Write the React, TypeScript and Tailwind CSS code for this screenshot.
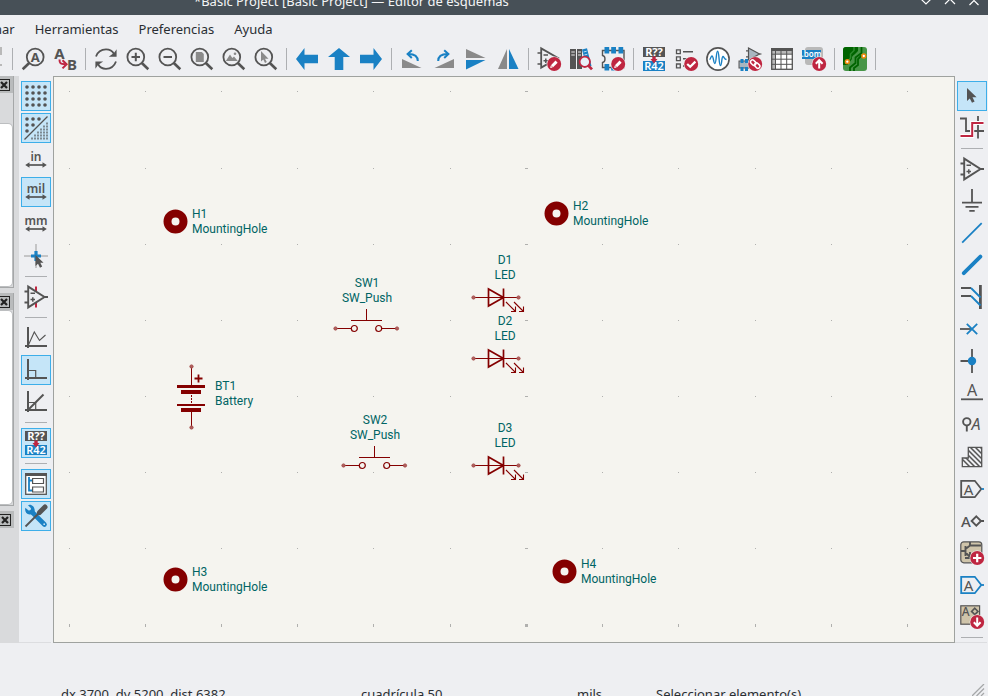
import type { ReactNode } from 'react';

const DARK = '#545454';
const BLUE = '#1a81c4';
const RED = '#bf2641';
const MAROON = '#840000';
const TEAL = '#006464';

function Icon({ children }: { children: ReactNode }) {
  return (
    <svg width="24" height="24" viewBox="0 0 24 24" fill="none" aria-hidden="true" className="shrink-0 overflow-visible">
      {children}
    </svg>
  );
}

// Red round badge in the lower right corner of an icon
function Badge({ kind }: { kind: 'edit' | 'check' | 'link' | 'up' | 'down' | 'plus' }) {
  return (
    <g>
      <circle cx="17.2" cy="17" r="7.6" fill="#eff0f1" />
      <circle cx="17.2" cy="17" r="7" fill={RED} />
      {kind === 'edit' && (
        <>
          <path d="M15 19.2 19.6 14.6" stroke="#fff" strokeWidth="3" />
          <path d="M13.2 21 13.7 18.5 15.7 20.5Z" fill="#fff" />
        </>
      )}
      {kind === 'check' && <path d="M13.2 17 16.2 19.8 21.4 14.6" stroke="#fff" strokeWidth="2.2" />}
      {kind === 'link' && (
        <g stroke="#fff" strokeWidth="1.5">
          <rect x="12.2" y="13.6" width="6" height="4" rx="2" transform="rotate(45 15.2 15.6)" />
          <rect x="16.2" y="16.6" width="6" height="4" rx="2" transform="rotate(45 19.2 18.6)" />
        </g>
      )}
      {kind === 'up' && <path d="M17.2 21.5V14M13.8 16.8 17.2 13.3 20.6 16.8" stroke="#fff" strokeWidth="2" />}
      {kind === 'down' && <path d="M17.2 12.5V20M13.8 17.2 17.2 20.7 20.6 17.2" stroke="#fff" strokeWidth="2" />}
      {kind === 'plus' && <path d="M17.2 12.8V21.2M13 17H21.4" stroke="#fff" strokeWidth="2.2" />}
    </g>
  );
}

function Letter({ x, y, size, children, fill = DARK, weight = 400, italic = false }: {
  x: number; y: number; size: number; children: string; fill?: string; weight?: number; italic?: boolean;
}) {
  return (
    <text x={x} y={y} fontSize={size} fill={fill} fontWeight={weight} fontStyle={italic ? 'italic' : 'normal'} textAnchor="middle">
      {children}
    </text>
  );
}

function Magnifier({ children }: { children: ReactNode }) {
  return (
    <Icon>
      <circle cx="9.8" cy="10" r="8.4" stroke={DARK} strokeWidth="1.8" />
      <path d="M15.8 16 22.3 22.3" stroke={DARK} strokeWidth="2.6" />
      {children}
    </Icon>
  );
}

function FindIcon() {
  return (
    <Icon>
      <circle cx="14.2" cy="10" r="8.4" stroke={DARK} strokeWidth="1.8" />
      <path d="M8.2 16 1.7 22.3" stroke={DARK} strokeWidth="2.6" />
      <Letter x={14.2} y={14.5} size={13} weight={700}>A</Letter>
    </Icon>
  );
}

function ReplaceIcon() {
  return (
    <Icon>
      <Letter x={6.5} y={11.5} size={15} weight={700}>A</Letter>
      <Letter x={19} y={23} size={15} weight={700}>B</Letter>
      <path d="M6.5 12.5C6.5 16.5 7.5 17.2 12 17.2" stroke={RED} strokeWidth="2" />
      <path d="M9.5 13.2 13.6 17.3 9.5 21.4" stroke={RED} strokeWidth="2" />
    </Icon>
  );
}

function RefreshIcon() {
  return (
    <Icon>
      <path d="M2 9.5C4 4 8 2.4 12 2.4 15.5 2.4 18.5 4.2 20 7" stroke={DARK} strokeWidth="1.8" />
      <path d="M22.6 2.3V9.8H14.8L17.8 7.6 20 6Z" fill={DARK} />
      <path d="M22 14.5C20 20 16 21.8 12 21.8 8.5 21.8 5.5 20 4 17" stroke={DARK} strokeWidth="1.8" />
      <path d="M1.4 21.8V14.4H9.2L6.2 16.6 4 18Z" fill={DARK} />
    </Icon>
  );
}

function RotateIcon({ cw = false }: { cw?: boolean }) {
  return (
    <Icon>
      <g transform={cw ? 'matrix(-1 0 0 1 24 0)' : undefined}>
        <path d="M2 12V21H21.5Z" fill="#8a8a8a" />
        <path d="M17.8 14C17.8 9.6 14.5 7 8.5 7" stroke={BLUE} strokeWidth="2" />
        <path d="M11.8 3.2 7.6 7 11.8 11" stroke={BLUE} strokeWidth="2" />
      </g>
    </Icon>
  );
}

function OpampShape() {
  return (
    <>
      <path d="M4.2 1.6V22.4L20.5 12Z" stroke={DARK} strokeWidth="1.9" />
      <path d="M0.5 6.5H4M0.5 17.5H4M20 12H24" stroke={DARK} strokeWidth="1.8" />
      <path d="M6.5 8.3H11M6.5 14.5H11M8.8 12.2V16.8" stroke={DARK} strokeWidth="1.5" />
    </>
  );
}

function SymbolEditorIcon() {
  return (
    <Icon>
      <path d="M4.2 1.4V20.6L21 11Z" stroke={DARK} strokeWidth="1.8" />
      <path d="M0.5 6H4M0.5 17H4M6.5 8H11M6.5 13.8H11M8.8 11.5V16" stroke={DARK} strokeWidth="1.5" />
      <Badge kind="edit" />
    </Icon>
  );
}

function LibraryIcon() {
  return (
    <Icon>
      <rect x="1" y="2" width="6" height="20" fill={DARK} />
      <rect x="8" y="2" width="5" height="20" fill={DARK} />
      <path d="M2.3 5H5.8M2.3 8H5.8M9 5H12M9 8H12" stroke="#e8e8e8" strokeWidth="1" />
      <path d="M13 2.5 18 1.2 22.5 19 17.5 20Z" fill={BLUE} />
      <path d="M14.7 5 17.7 4.2M15.4 8 18.4 7.2" stroke="#b9dcf2" strokeWidth="1" />
      <circle cx="15.8" cy="14.8" r="5.2" fill="#e8f1f8" stroke={RED} strokeWidth="1.8" />
      <path d="M19.4 18.6 23 22.4" stroke={RED} strokeWidth="2.8" />
    </Icon>
  );
}

function FootprintIcon() {
  return (
    <Icon>
      <path d="M1.5 3.5H23V20.5H1.5V15.5C4.8 15 4.8 9 1.5 8.5Z" stroke={DARK} strokeWidth="1.4" />
      <path d="M3.5 0H8.2V6.5H3.5ZM10.2 0H15V6.5H10.2ZM17.5 0H22.2V6.5H17.5ZM3.5 17H8.2V23.5H3.5ZM10.2 17H15V23.5H10.2Z" fill={BLUE} />
      <Badge kind="edit" />
    </Icon>
  );
}

function AnnotateIcon() {
  return (
    <Icon>
      <rect x="1" y="0" width="22" height="10" fill={DARK} />
      <rect x="1" y="14" width="22" height="10" fill={BLUE} />
      <Letter x={12} y={9} size={11} weight={700} fill="#fff">R??</Letter>
      <Letter x={12} y={23} size={11} weight={600} fill="#fff">R42</Letter>
      <path d="M10.3 9.5H13.7V12H15.5L12 16.4 8.5 12H10.3Z" fill={RED} />
    </Icon>
  );
}

function ErcIcon() {
  return (
    <Icon>
      <path d="M2.5 2.8H6.3V6.6H2.5ZM2.5 9.9H6.3V13.7H2.5ZM2.5 17H6.3V20.8H2.5Z" stroke={DARK} strokeWidth="1.3" />
      <path d="M9 4.8H19M9 11.8H15M9 19H12" stroke={DARK} strokeWidth="1.4" />
      <Badge kind="check" />
    </Icon>
  );
}

function SimIcon() {
  return (
    <Icon>
      <circle cx="12" cy="12" r="11.1" fill="#fff" stroke={DARK} strokeWidth="1.6" />
      <path d="M3.5 12.5C4.5 12.5 5 9 6 9 7.5 9 7.5 16.5 8.8 16.5 10.5 16.5 10 4.2 11.6 4.2 13.3 4.2 12.8 18.5 14.4 18.5 16 18.5 15.5 9.5 17 9.5 18 9.5 18.3 12.5 20.5 12.5" stroke={BLUE} strokeWidth="1.4" />
    </Icon>
  );
}

function AssignIcon() {
  return (
    <Icon>
      <path d="M10.5 1V13L21.5 7Z" fill="#a9b6c0" stroke={DARK} strokeWidth="1.2" />
      <path d="M8 3.8H10.5M8 9.8H10.5M21 7H23.5" stroke={DARK} strokeWidth="1.2" />
      <rect x="1" y="14" width="14" height="7" fill="#a9b6c0" stroke={DARK} strokeWidth="1" />
      <path d="M2.5 12H5.5V16H2.5ZM7 12H10V16H7ZM2.5 20H5.5V24H2.5ZM7 20H10V24H7Z" fill={BLUE} />
      <Badge kind="link" />
    </Icon>
  );
}

function TableIcon() {
  return (
    <Icon>
      <rect x="1.7" y="1.7" width="20.6" height="20.6" fill="#fff" />
      <path d="M1.7 4H22.3V7H5.5V22.3H1.7Z" fill="#b9b9b9" />
      <path d="M1 7.2H23M1 12.2H23M1 17.3H23M5.5 3V22M11 3V22M16.7 3V22" stroke={DARK} strokeWidth="1" />
      <rect x="1.7" y="1.7" width="20.6" height="20.6" stroke={DARK} strokeWidth="1.3" />
      <path d="M1 2.5H23" stroke={DARK} strokeWidth="3" />
    </Icon>
  );
}

function BomIcon() {
  return (
    <Icon>
      <rect x="3" y="0" width="18" height="18" rx="3" fill="#b9b9b9" />
      <rect x="0" y="3" width="19" height="9" fill={BLUE} />
      <Letter x={9.5} y={10} size={8} weight={600} fill="#fff">.bom</Letter>
      <Badge kind="up" />
    </Icon>
  );
}

function PcbIcon() {
  return (
    <Icon>
      <rect width="24" height="24" rx="3" fill="#489648" />
      <path d="M3 0H15V4L9 10V12L4.5 18H0V3A3 3 0 0 1 3 0Z" fill="#006400" />
      <path d="M16.500 0V5.500L10.500 9.500V15L5 20V24" stroke="#489648" strokeWidth="1.6" />
      <path d="M18.500 0V6L12.500 10.500V16L7 20.500V24" stroke="#006400" strokeWidth="1.8" />
      <path d="M20.800 9H18L15 12V18L11 21V24" stroke="#006400" strokeWidth="1.8" />
      <path d="M4.300 14.700 7.500 11V7L11 3.500V0" stroke="#2c8a2c" strokeWidth="1.5" />
      <circle cx="4.3" cy="14.7" r="1.9" fill="#fff" stroke="#f0870a" strokeWidth="1.5" />
      <circle cx="20.8" cy="9" r="1.9" fill="#fff" stroke="#f0870a" strokeWidth="1.5" />
    </Icon>
  );
}

function GridIcon() {
  const steps = [3, 9, 15, 21];
  return (
    <Icon>
      {steps.map((y) => steps.map((x) => <circle key={`${x}-${y}`} cx={x} cy={y} r="1.8" fill={DARK} />))}
    </Icon>
  );
}

function GridOverrideIcon() {
  const small: [number, number][] = [];
  for (let r = 0; r < 6; r++) {
    for (let c = 5 - r; c < 6; c++) small.push([7 + c * 3, 6.5 + r * 3]);
  }
  return (
    <Icon>
      {[[3, 3], [9, 3], [15, 3], [3, 9], [9, 9], [3, 15]].map(([x, y]) => (
        <circle key={`${x}-${y}`} cx={x} cy={y} r="1.8" fill={DARK} />
      ))}
      {small.map(([x, y]) => (
        <rect key={`${x}-${y}`} x={x} y={y} width="2" height="2" fill="#7d8a92" />
      ))}
      <path d="M0.5 23.5 23.5 0.5" stroke={DARK} strokeWidth="1.3" />
    </Icon>
  );
}

function UnitIcon({ unit }: { unit: string }) {
  return (
    <Icon>
      <Letter x={12} y={13} size={12} weight={600}>{unit}</Letter>
      <path d="M3 17H21" stroke={DARK} strokeWidth="1.7" />
      <path d="M1.2 17 5.5 14.2V19.8ZM22.8 17 18.5 14.2V19.8Z" fill={DARK} />
    </Icon>
  );
}

function CrosshairIcon() {
  return (
    <Icon>
      <path d="M12 0V24M0 12H24" stroke="#9a9a9a" strokeWidth="1" />
      <path d="M12 7V17M7 12H17" stroke={BLUE} strokeWidth="3.2" />
      <path d="M11.5 11V22L14 19.7 16 23.7 18.2 22.6 16.3 18.8H19.5Z" fill={DARK} />
    </Icon>
  );
}

function HiddenPinsIcon() {
  return (
    <Icon>
      <path d="M12 1.5V6M12 18V22.5" stroke={RED} strokeWidth="2" />
      <OpampShape />
    </Icon>
  );
}

function AxisIcon({ kind }: { kind: 'free' | 'right' | 'diagonal' }) {
  return (
    <Icon>
      <path d="M4 1V22M1 20H23" stroke={DARK} strokeWidth="2" />
      {kind === 'free' && <path d="M4 20 10.3 6 15.5 14.5 21.5 9" stroke={DARK} strokeWidth="1.1" />}
      {kind !== 'free' && <path d="M4 12.5H11.7V20" stroke={DARK} strokeWidth="1.2" />}
      {kind === 'diagonal' && <path d="M4 20 19.5 4.5" stroke={DARK} strokeWidth="2" />}
    </Icon>
  );
}

function HierarchyIcon() {
  return (
    <Icon>
      <rect x="1.7" y="1.7" width="20.6" height="20.6" fill="#fff" stroke={DARK} strokeWidth="1.3" />
      <path d="M1 2.5H23" stroke={DARK} strokeWidth="3" />
      <path d="M5 5V18.5H9M5 8.5H9" stroke={BLUE} strokeWidth="1.8" />
      <path d="M8.6 6.5H19.5V11.5H8.6ZM8.6 15H19.5V20H8.6Z" fill="#fff" stroke={DARK} strokeWidth="1.2" />
    </Icon>
  );
}

function ToolsIcon() {
  return (
    <Icon>
      <path d="M8 8 20.5 20.5" stroke={BLUE} strokeWidth="4.6" strokeLinecap="round" />
      <path d="M4 1.2 7 4.2 6.6 6.2 4.6 6.6 1.4 3.8C.4 7 2.2 10.3 5.6 10.6L8 10.3 10.6 7.8C11.3 4.5 9 .8 5.6.8Z" fill={BLUE} />
      <circle cx="20.2" cy="20.2" r="0.9" fill="#c5e5f8" />
      <path d="M1.5 22.5 15 9" stroke={DARK} strokeWidth="1.8" />
      <path d="M15.5 8.5 21 3" stroke={DARK} strokeWidth="5" strokeLinecap="round" />
    </Icon>
  );
}

function HighlightNetIcon() {
  return (
    <Icon>
      <path d="M0 2.5H6V15H10M18 0V22.5M14 15H24" stroke={DARK} strokeWidth="1.8" />
      <path d="M0.5 20H12.2V7H23.5" stroke="#fff" strokeWidth="4" />
      <path d="M0.5 20H12.2V7H23.5" stroke={RED} strokeWidth="2" />
    </Icon>
  );
}

function LabelIcon({ color }: { color: string }) {
  return (
    <Icon>
      <path d="M1.2 3.8H14.8L21.3 12 14.8 20.2H1.2Z" stroke={color} strokeWidth="1.8" />
      <path d="M21.5 12H24" stroke={BLUE} strokeWidth="1.8" />
      <Letter x={8.6} y={17.5} size={15}>A</Letter>
    </Icon>
  );
}

function RuleAreaIcon() {
  return (
    <Icon>
      <clipPath id="rule-area">
        <path d="M8.3 2.3H21.7V21.7H2.3V13H8.3Z" />
      </clipPath>
      <path clipPath="url(#rule-area)" d="M-12 0 12 24M-7 0 17 24M-2 0 22 24M3 0 27 24M8 0 32 24M13 0 37 24M18 0 42 24" stroke={DARK} strokeWidth="1.5" />
      <path d="M8.3 2.3H21.7V21.7H2.3V13H8.3Z" stroke={DARK} strokeWidth="1.3" />
    </Icon>
  );
}

function SheetIcon() {
  return (
    <Icon>
      <rect x="0.8" y="0.8" width="21" height="21" rx="3" fill="#cfc4aa" stroke={DARK} strokeWidth="1.2" />
      <path d="M1 10H5M5.5 5V15M5.5 8 10 4.5V1M10 4.5H21M5.5 11.5 10 16M10 11V17H5" stroke={DARK} strokeWidth="1.9" />
      <Badge kind="plus" />
    </Icon>
  );
}

type Tool = { label: string; icon: ReactNode; active?: boolean } | 'sep';

const topTools: Tool[] = [
  'sep',
  { label: 'Buscar', icon: <FindIcon /> },
  { label: 'Buscar y reemplazar', icon: <ReplaceIcon /> },
  'sep',
  { label: 'Refrescar', icon: <RefreshIcon /> },
  { label: 'Acercar', icon: <Magnifier><path d="M5.5 10H14M9.8 5.8V14.2" stroke={DARK} strokeWidth="2" /></Magnifier> },
  { label: 'Alejar', icon: <Magnifier><path d="M5.5 10H14" stroke={DARK} strokeWidth="2" /></Magnifier> },
  { label: 'Ajustar a la hoja', icon: <Magnifier><path d="M5.8 5H11.8L13.8 7V15H5.8Z" fill="#8a8a8a" /></Magnifier> },
  {
    label: 'Ajustar a los objetos',
    icon: (
      <Magnifier>
        <path d="M3.8 14 8 7.5 10.3 11 12 9.5 15.8 14Z" fill="#8a8a8a" />
        <circle cx="13" cy="6.8" r="1.3" fill="#8a8a8a" />
      </Magnifier>
    ),
  },
  {
    label: 'Ajustar a la selección',
    icon: <Magnifier><path d="M7 4V14.5L9.3 12.5 11 16 12.8 15 11 11.8H14.5Z" fill="#8a8a8a" /></Magnifier>,
  },
  'sep',
  { label: 'Atrás', icon: <Icon><path d="M1 12 9.5 1V7.7H23V16.3H9.5V23Z" fill={BLUE} /></Icon> },
  { label: 'Subir', icon: <Icon><path d="M12 1 23 10H16.3V23H7.7V10H1Z" fill={BLUE} /></Icon> },
  { label: 'Adelante', icon: <Icon><path d="M23 12 14.5 1V7.7H1V16.3H14.5V23Z" fill={BLUE} /></Icon> },
  'sep',
  { label: 'Rotar a la izquierda', icon: <RotateIcon /> },
  { label: 'Rotar a la derecha', icon: <RotateIcon cw /> },
  {
    label: 'Reflejar verticalmente',
    icon: <Icon><path d="M2 2V11H21.5Z" fill="#8a8a8a" /><path d="M2 13H21.5L2 22.5Z" fill={BLUE} /></Icon>,
  },
  {
    label: 'Reflejar horizontalmente',
    icon: <Icon><path d="M11 2V22H2Z" fill="#8a8a8a" /><path d="M13 2V22H22.5Z" fill={BLUE} /></Icon>,
  },
  'sep',
  { label: 'Editor de símbolos', icon: <SymbolEditorIcon /> },
  { label: 'Explorar bibliotecas', icon: <LibraryIcon /> },
  { label: 'Editor de huellas', icon: <FootprintIcon /> },
  'sep',
  { label: 'Anotar', icon: <AnnotateIcon /> },
  { label: 'Comprobar reglas', icon: <ErcIcon /> },
  { label: 'Simulador', icon: <SimIcon /> },
  { label: 'Asignar huellas', icon: <AssignIcon /> },
  { label: 'Tabla de campos', icon: <TableIcon /> },
  { label: 'Generar BOM', icon: <BomIcon /> },
  'sep',
  { label: 'Abrir placa', icon: <PcbIcon /> },
  'sep',
];

const leftTools: Tool[] = [
  { label: 'Cuadrícula', icon: <GridIcon />, active: true },
  { label: 'Cuadrículas alternativas', icon: <GridOverrideIcon />, active: true },
  { label: 'Pulgadas', icon: <UnitIcon unit="in" /> },
  { label: 'Milésimas', icon: <UnitIcon unit="mil" />, active: true },
  { label: 'Milímetros', icon: <UnitIcon unit="mm" /> },
  { label: 'Cursor completo', icon: <CrosshairIcon /> },
  'sep',
  { label: 'Pines ocultos', icon: <HiddenPinsIcon /> },
  'sep',
  { label: 'Ángulo libre', icon: <AxisIcon kind="free" /> },
  { label: 'Ángulo de 90', icon: <AxisIcon kind="right" />, active: true },
  { label: 'Ángulo de 45', icon: <AxisIcon kind="diagonal" /> },
  'sep',
  { label: 'Anotación automática', icon: <AnnotateIcon />, active: true },
  'sep',
  { label: 'Jerarquía', icon: <HierarchyIcon />, active: true },
  { label: 'Propiedades', icon: <ToolsIcon />, active: true },
];

const rightTools: Tool[] = [
  {
    label: 'Seleccionar',
    icon: <Icon><path d="M7 4V17L9.8 14.5 12 18.8 14.6 17.5 12.5 13.3H16.6Z" fill={DARK} /></Icon>,
    active: true,
  },
  { label: 'Resaltar red', icon: <HighlightNetIcon /> },
  'sep',
  { label: 'Agregar símbolo', icon: <Icon><OpampShape /></Icon> },
  {
    label: 'Agregar alimentación',
    icon: <Icon><path d="M12 0V13.5M2 13.7H22M5.5 17.8H18.5M9.3 21.8H14.7" stroke={DARK} strokeWidth="1.8" /></Icon>,
  },
  { label: 'Agregar cable', icon: <Icon><path d="M2.2 21.6 21.7 2.2" stroke={BLUE} strokeWidth="1.8" /></Icon> },
  { label: 'Agregar bus', icon: <Icon><path d="M3.8 20.2 20.4 3.6" stroke={BLUE} strokeWidth="3.8" strokeLinecap="round" /></Icon> },
  {
    label: 'Agregar entrada de bus',
    icon: (
      <Icon>
        <path d="M1 3H11M1 11H11" stroke={DARK} strokeWidth="1.8" />
        <path d="M20.4 0V24" stroke={DARK} strokeWidth="2.8" />
        <path d="M11 3 20.5 12.5M11 11 20.5 20.5" stroke={BLUE} strokeWidth="1.8" />
      </Icon>
    ),
  },
  {
    label: 'Agregar no conexión',
    icon: (
      <Icon>
        <path d="M0 12H11" stroke={DARK} strokeWidth="1.8" />
        <path d="M6.8 6.8 17.2 17.2M6.8 17.2 17.2 6.8" stroke={BLUE} strokeWidth="1.8" />
      </Icon>
    ),
  },
  {
    label: 'Agregar unión',
    icon: (
      <Icon>
        <path d="M12 0V24M0.5 12H12" stroke={DARK} strokeWidth="1.8" />
        <circle cx="12" cy="12" r="4.2" fill={BLUE} />
      </Icon>
    ),
  },
  {
    label: 'Agregar etiqueta',
    icon: <Icon><Letter x={12} y={15} size={16}>A</Letter><path d="M1 18.3H23" stroke={DARK} strokeWidth="1.8" /></Icon>,
  },
  {
    label: 'Agregar directiva de red',
    icon: (
      <Icon>
        <circle cx="6.8" cy="8.8" r="3.7" stroke={DARK} strokeWidth="1.9" />
        <path d="M6.8 12.5V18.5" stroke={DARK} strokeWidth="1.9" />
        <Letter x={16} y={17} size={16} italic>A</Letter>
      </Icon>
    ),
  },
  { label: 'Agregar área de reglas', icon: <RuleAreaIcon /> },
  { label: 'Agregar etiqueta global', icon: <LabelIcon color={DARK} /> },
  {
    label: 'Agregar etiqueta jerárquica',
    icon: (
      <Icon>
        <Letter x={6} y={17.5} size={15} weight={500}>A</Letter>
        <path d="M16.3 7.3 21 12 16.3 16.7 11.6 12ZM21 12H24" stroke={DARK} strokeWidth="1.9" />
      </Icon>
    ),
  },
  { label: 'Agregar hoja', icon: <SheetIcon /> },
  { label: 'Importar pin de hoja', icon: <LabelIcon color={BLUE} /> },
  {
    label: 'Sincronizar pines',
    icon: (
      <Icon>
        <rect x="0.8" y="0.8" width="18.8" height="18.4" fill="#cfc4aa" stroke={DARK} strokeWidth="1.2" />
        <Letter x={5.8} y={10.5} size={12} weight={500}>A</Letter>
        <path d="M14.8 3.2 18 6.4 14.8 9.6 11.6 6.4Z" stroke={DARK} strokeWidth="1.6" />
        <Badge kind="down" />
      </Icon>
    ),
  },
  'sep',
];

function SideToolbar({ tools, label }: { tools: Tool[]; label: string }) {
  return (
    <div role="toolbar" aria-label={label} className="flex shrink-0 flex-col items-center border-b border-[#dcdde0] pt-1 pl-0.5">
      {tools.map((tool, i) =>
        tool === 'sep' ? (
          <div key={i} className="my-1 h-px w-[22px] shrink-0 bg-[#adafb2]" />
        ) : (
          <button
            key={i}
            type="button"
            aria-label={tool.label}
            className={`my-px flex size-[30px] shrink-0 items-center justify-center border ${
              tool.active ? 'border-[#3daee9] bg-[#c5e5f8]' : 'border-transparent'
            }`}
          >
            {tool.icon}
          </button>
        )
      )}
    </div>
  );
}

function DockHeader() {
  return (
    <div className="flex h-[17px] shrink-0 items-center justify-end bg-[#b9bbbc] pr-[3px]">
      <button type="button" aria-label="Cerrar panel" className="shrink-0">
        <svg width="12" height="12" viewBox="0 0 12 12" fill="none" className="block">
          <rect x="0.5" y="0.5" width="11" height="11" stroke="#222" />
          <path d="M3 3 9 9M9 3 3 9" stroke="#222" strokeWidth="2.2" />
        </svg>
      </button>
    </div>
  );
}

function LeftDocks() {
  return (
    <aside className="flex w-[19px] shrink-0 flex-col bg-[#d9dadc] pr-[5px]">
      <section className="flex h-[212px] shrink-0 flex-col border-r border-b border-[#a5a7a8]">
        <DockHeader />
        <div className="mt-[30px] grow rounded-r-[5px] border-y border-r border-[#bcbec0] bg-white" />
      </section>
      <section className="mt-[5px] flex h-[213px] shrink-0 flex-col border-r border-b border-[#a5a7a8]">
        <DockHeader />
        <div className="grow rounded-r-[5px] border-y border-r border-[#bcbec0] bg-white" />
      </section>
      <section className="mt-[5px]">
        <DockHeader />
      </section>
    </aside>
  );
}

// Open end of an unconnected pin
function PinEnd({ x, y }: { x: number; y: number }) {
  return <circle cx={x} cy={y} r="1.6" fill="#b0605e" stroke="#a34a48" strokeWidth="1" />;
}

function SymbolText({ x, y, refName, value, centered = false }: {
  x: number; y: number; refName: string; value: string; centered?: boolean;
}) {
  return (
    <text fontSize="12" fill={TEAL} textAnchor={centered ? 'middle' : 'start'}>
      <tspan x={x} y={y}>{refName}</tspan>
      <tspan x={x} y={y + 15}>{value}</tspan>
    </text>
  );
}

function MountingHole({ x, y, name }: { x: number; y: number; name: string }) {
  return (
    <g transform={`translate(${x} ${y})`}>
      <circle cx="0.5" cy="0.5" r="8" stroke={MAROON} strokeWidth="8" fill="none" />
      <SymbolText x={17} y={-3} refName={name} value="MountingHole" />
    </g>
  );
}

function PushSwitch({ x, y, name }: { x: number; y: number; name: string }) {
  return (
    <g transform={`translate(${x} ${y})`} stroke={MAROON} fill="none">
      <path d="M-30 .5H-15M15.500 .5H31M-15-7.500H16M.5-19V-8" />
      <circle cx="-11.7" cy="0.5" r="3" strokeWidth="1.2" />
      <circle cx="12.7" cy="0.5" r="3" strokeWidth="1.2" />
      <g stroke="none">
        <PinEnd x={-30.5} y={0.5} />
        <PinEnd x={31} y={0.5} />
        <SymbolText x={1} y={-41} refName={name} value="SW_Push" centered />
      </g>
    </g>
  );
}

function Led({ x, y, name }: { x: number; y: number; name: string }) {
  return (
    <g transform={`translate(${x} ${y})`} fill="none">
      <path d="M-22 .5H23" stroke={MAROON} />
      <path d="M-7.500-8V9L7.500 .5ZM7.500-8.500V9.500" stroke={MAROON} strokeWidth="1.7" />
      <path d="M10 5 19.500 14.500M15 14.500H19.500V9.500M18 5 27.500 14.500M23 14.500H27.500V9.500" stroke={MAROON} strokeWidth="1.1" />
      <PinEnd x={-22.5} y={0.5} />
      <PinEnd x={22.5} y={0.5} />
      <SymbolText x={9} y={-33} refName={name} value="LED" centered />
    </g>
  );
}

function Battery({ x, y, name }: { x: number; y: number; name: string }) {
  return (
    <g transform={`translate(${x} ${y})`}>
      <path d="M.5-30V-11M.5 14V30" stroke={MAROON} />
      <path d="M.5-2V8" stroke={MAROON} strokeDasharray="2 1" />
      <path d="M-14-12H14V-9H-14ZM-10-7H10V-3H-10ZM-14 7H14V9H-14ZM-10 11H10V15H-10Z" fill={MAROON} />
      <path d="M3.500-18.500H11.500M7.500-22.500V-14.500" stroke={MAROON} strokeWidth="1.8" />
      <PinEnd x={0.5} y={-30.5} />
      <PinEnd x={0.5} y={30.5} />
      <SymbolText x={24} y={-7} refName={name} value="Battery" />
    </g>
  );
}

const gridCols = [15, 91, 167, 243, 319, 396, 472, 548, 624, 701, 777, 853];
const gridRows = [14, 91, 167, 243, 319, 395, 471, 547];

function Schematic() {
  return (
    <main className="min-w-0 grow overflow-hidden border border-[#9fa29f] bg-[#f5f4ef]">
      <svg className="block h-full w-full font-[Roboto,sans-serif]" role="img" aria-label="Esquema">
        {gridRows.map((y) =>
          gridCols.map((x) => {
            const wide = x === 472;
            const tall = y === 547;
            return (
              <rect
                key={`${x}-${y}`}
                x={wide ? x - 1 : x}
                y={y}
                width={wide ? 3 : 1}
                height={tall ? 3 : 1}
                fill="#b0b0ae"
              />
            );
          })
        )}
        <MountingHole x={121} y={144} name="H1" />
        <MountingHole x={502} y={136} name="H2" />
        <MountingHole x={121} y={502} name="H3" />
        <MountingHole x={510} y={494} name="H4" />
        <PushSwitch x={312} y={251} name="SW1" />
        <PushSwitch x={320} y={388} name="SW2" />
        <Led x={442} y={220} name="D1" />
        <Led x={442} y={281} name="D2" />
        <Led x={442} y={388} name="D3" />
        <Battery x={137} y={320} name="BT1" />
      </svg>
    </main>
  );
}

export default function App() {
  return (
    <div className="flex h-screen flex-col overflow-hidden bg-[#eeeff2] font-['Noto_Sans',sans-serif] text-[13px] leading-5 text-[#2a2e32]">
      <header className="flex h-[15px] shrink-0 items-end justify-between bg-[#475057] pr-2 pb-1 pl-[194px] text-[#f4f5f6]">
        <h1 className="whitespace-nowrap">*Basic Project [Basic Project] — Editor de esquemas</h1>
        <div className="flex gap-3">
          <button type="button" aria-label="Minimizar" className="size-3">
            <svg width="12" height="12" fill="none" stroke="#fff" strokeWidth="1.2"><path d="M1 0 6 5 11 0" /></svg>
          </button>
          <button type="button" aria-label="Maximizar" className="size-3">
            <svg width="12" height="12" fill="none" stroke="#fff" strokeWidth="1.2"><path d="M1 5 6 0 11 5" /></svg>
          </button>
          <button type="button" aria-label="Cerrar" className="size-3">
            <svg width="12" height="12" fill="none" stroke="#fff" strokeWidth="1.2"><path d="M1.500-3 10.500 6M10.500-3 1.500 6" /></svg>
          </button>
        </div>
      </header>

      <nav className="-ml-4 flex h-7 shrink-0 items-center">
        {['nar', 'Herramientas', 'Preferencias', 'Ayuda'].map((item) => (
          <button key={item} type="button" className="px-2.5">
            {item}
          </button>
        ))}
      </nav>

      <div role="toolbar" aria-label="Principal" className="flex h-[33px] shrink-0 items-start">
        <svg width="8" height="32" aria-hidden="true" className="shrink-0">
          <path d="M0 4H2V12H0ZM0 21H2V23H0Z" fill="#b9b9b9" />
        </svg>
        {topTools.map((tool, i) =>
          tool === 'sep' ? (
            <div key={i} className="mx-1 mt-[5px] h-[22px] w-px shrink-0 bg-[#adafb2]" />
          ) : (
            <button key={i} type="button" aria-label={tool.label} className="flex size-8 shrink-0 items-center justify-center">
              {tool.icon}
            </button>
          )
        )}
      </div>

      <div className="flex min-h-0 grow">
        <LeftDocks />
        <div className="flex shrink-0 pr-0.5">
          <SideToolbar tools={leftTools} label="Opciones" />
        </div>
        <Schematic />
        <div className="flex shrink-0 pr-px">
          <SideToolbar tools={rightTools} label="Dibujo" />
        </div>
      </div>

      <footer className="flex h-[53px] shrink-0 items-start overflow-hidden pt-[41px] pl-[61px] whitespace-pre">
        <span className="w-[300px]">dx 3700  dy 5200  dist 6382</span>
        <span className="w-[216px]">cuadrícula 50</span>
        <span className="w-[79px]">mils</span>
        <span className="grow">Seleccionar elemento(s)</span>
        <svg width="16" height="12" fill="none" stroke="#a5a7a9" strokeWidth="1.3" aria-hidden="true">
          <path d="M0 12 12 0M4.500 12 12 4.500M9 12 12 9" />
        </svg>
      </footer>
    </div>
  );
}
